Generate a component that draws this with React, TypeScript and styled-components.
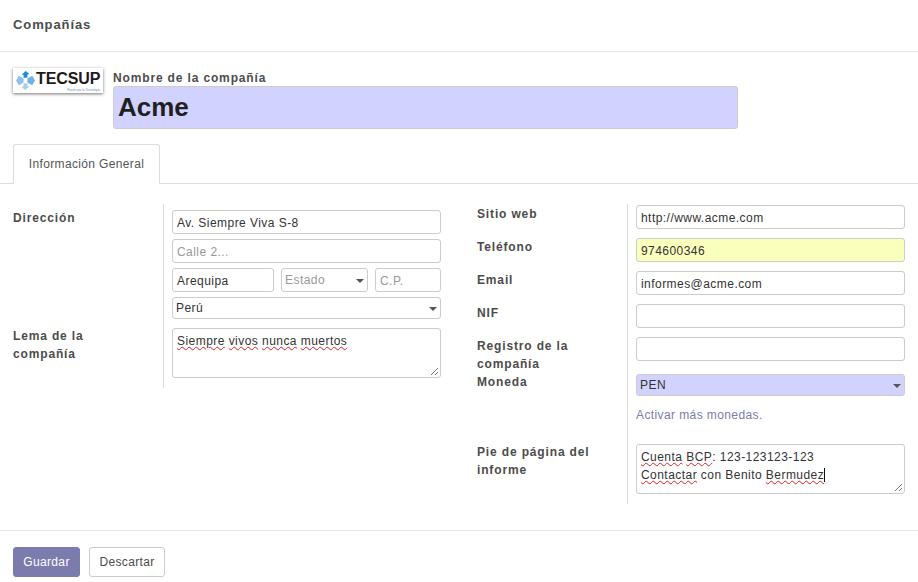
import React from "react";
import styled, { createGlobalStyle } from "styled-components";

const GlobalStyle = createGlobalStyle`
  html, body {
    margin: 0;
    padding: 0;
    background: #fff;
  }
  body {
    font-family: "Liberation Sans", Arial, sans-serif;
    font-size: 12px;
    color: #4c4c4c;
  }
`;

const Page = styled.div`
  width: 918px;
  height: 582px;
  overflow: hidden;
`;

const Header = styled.header`
  height: 51px;
  border-bottom: 1px solid #e6e6e6;
  padding-left: 13px;
  display: flex;
  align-items: center;
`;

const Title = styled.h1`
  margin: 0 0 3px;
  font-size: 13px;
  font-weight: 700;
  letter-spacing: 0.9px;
  color: #4c4c4c;
`;

const NameRow = styled.section`
  display: flex;
  box-sizing: border-box;
  padding: 16px 0 0 13px;
  height: 77px;
`;

const LogoBox = styled.div`
  width: 90px;
  height: 25px;
  box-shadow: 0 1px 3px rgba(0, 0, 0, 0.55);
  display: flex;
  align-items: center;
  padding-left: 2px;
  box-sizing: border-box;
  position: relative;
  margin-right: 10px;
  background: #fff;
`;

const LogoWord = styled.span`
  font-size: 16px;
  font-weight: 700;
  letter-spacing: -0.1px;
  color: #1f1a1a;
  margin-top: -3px;
`;

const LogoTag = styled.span`
  position: absolute;
  right: 3px;
  bottom: 1px;
  font-size: 3px;
  color: #5a8fc8;
`;

const NameBlock = styled.div`
  width: 625px;
  padding-top: 1px;
`;

const Label = styled.label`
  display: block;
  font-weight: 700;
  font-size: 12px;
  line-height: 18px;
  letter-spacing: 0.85px;
  color: #4c4c4c;
`;

const NameInput = styled.input`
  display: block;
  box-sizing: border-box;
  width: 100%;
  height: 43px;
  margin-top: -1px;
  padding: 0 4px;
  background: #d2d2ff;
  border: 1px solid #ccc;
  border-radius: 3px;
  font-family: inherit;
  font-size: 26px;
  font-weight: 700;
  color: #1f1f1f;
  outline: none;
`;

const TabBar = styled.nav`
  margin-top: 15px;
  height: 39px;
  padding-left: 13px;
  border-bottom: 1px solid #ddd;
  display: flex;
`;

const Tab = styled.div`
  width: 147px;
  height: 40px;
  box-sizing: border-box;
  border: 1px solid #ddd;
  border-bottom-color: #fff;
  border-radius: 3px 3px 0 0;
  background: #fff;
  display: flex;
  align-items: center;
  justify-content: center;
  letter-spacing: 0.35px;
  color: #555;
`;

const Columns = styled.main`
  display: flex;
  box-sizing: border-box;
  height: 346px;
  padding: 20px 0 0 13px;
`;

const Column = styled.div<{ $gap?: number }>`
  width: 428px;
  flex: none;
  margin-left: ${(p) => p.$gap ?? 0}px;
`;

const Group = styled.div<{ $height: number }>`
  display: grid;
  grid-template-columns: 150px 1fr;
  height: ${(p) => p.$height}px;
`;

const Labels = styled.div<{ $top?: number }>`
  display: flex;
  flex-direction: column;
  padding-right: 20px;
  padding-top: ${(p) => p.$top ?? 0}px;
`;

const FieldLabel = styled(Label)<{ $height: number }>`
  height: ${(p) => p.$height}px;
  flex: none;
`;

const Values = styled.div<{ $top: number }>`
  border-left: 1px solid #ddd;
  padding-left: 8px;
  padding-top: ${(p) => p.$top}px;
  display: flex;
  flex-direction: column;
`;

const Input = styled.input<{ $tone?: string; $mb?: number; $width?: number }>`
  display: block;
  box-sizing: border-box;
  width: ${(p) => (p.$width ? `${p.$width}px` : "100%")};
  height: 24px;
  flex: none;
  padding: 2px 4px 0;
  margin-bottom: ${(p) => p.$mb ?? 5}px;
  background: ${(p) => p.$tone ?? "#fff"};
  border: 1px solid #ccc;
  border-radius: 3px;
  font-family: inherit;
  font-size: 12px;
  letter-spacing: 0.45px;
  color: #333;
  outline: none;
  &::placeholder {
    color: #999;
    opacity: 1;
  }
`;

const Select = styled.div<{ $tone?: string; $width?: number; $muted?: boolean; $tall?: boolean }>`
  position: relative;
  box-sizing: border-box;
  flex: none;
  width: ${(p) => (p.$width ? `${p.$width}px` : "100%")};
  height: ${(p) => (p.$tall ? 24 : 22)}px;
  line-height: ${(p) => (p.$tall ? 23 : 21)}px;
  padding-left: 3px;
  background: ${(p) => p.$tone ?? "#fff"};
  border: 1px solid #ccc;
  border-radius: 3px;
  letter-spacing: 0.45px;
  color: ${(p) => (p.$muted ? "#999" : "#333")};
  &::after {
    content: "";
    position: absolute;
    right: 3px;
    top: 50%;
    margin-top: -1px;
    border-style: solid;
    border-width: 4px 4px 0;
    border-color: #555 transparent transparent;
  }
`;

const CityRow = styled.div`
  display: flex;
  gap: 7px;
  margin-bottom: 5px;
`;

const TextArea = styled.div<{ $mt?: number }>`
  position: relative;
  box-sizing: border-box;
  flex: none;
  width: 100%;
  height: 50px;
  margin-top: ${(p) => p.$mt ?? 0}px;
  padding: 3px 4px;
  border: 1px solid #ccc;
  border-radius: 3px;
  line-height: 18px;
  letter-spacing: 0.45px;
  color: #333;
  background: #fff;
`;

const Misspelt = styled.span`
  text-decoration: underline wavy #e02020 1px;
  text-underline-offset: 1px;
`;

const Caret = styled.span`
  border-right: 1px solid #111;
`;

const Grip = styled.svg`
  position: absolute;
  right: 1px;
  bottom: 1px;
`;

const MoreLink = styled.a`
  display: block;
  margin: 10px 0 20px;
  height: 18px;
  line-height: 18px;
  letter-spacing: 0.4px;
  color: #7c7bad;
  text-decoration: none;
`;

const Footer = styled.footer`
  border-top: 1px solid #e6e6e6;
  padding: 16px 13px 0;
  display: flex;
  gap: 9px;
`;

const Button = styled.button<{ $primary?: boolean }>`
  height: 30px;
  box-sizing: border-box;
  padding: 0;
  width: ${(p) => (p.$primary ? 67 : 76)}px;
  border: 1px solid ${(p) => (p.$primary ? "#7c7bad" : "#ccc")};
  border-radius: 3px;
  background: ${(p) => (p.$primary ? "#7c7bad" : "#fff")};
  color: ${(p) => (p.$primary ? "#fff" : "#4c4c4c")};
  font-family: inherit;
  font-size: 12px;
  letter-spacing: 0.35px;
`;

const ResizeGrip = () => (
  <Grip width="9" height="9" viewBox="0 0 9 9">
    <path d="M1 8 8 1M5 8 8 5" stroke="#777" strokeWidth="1" fill="none" />
  </Grip>
);

const LogoMark = () => (
  <svg width="21" height="21" viewBox="0 0 22 22">
    <path d="M11 1 15 4 13 5 13 8 9 8 9 5 7 5Z" fill="#1d8fd8" />
    <path d="M4 6 9 9 9 13 4 16 1 11Z" fill="#8cc3ee" />
    <path d="M18 6 21 11 18 16 13 13 13 9Z" fill="#6fb2e6" />
    <path d="M9 14 13 14 13 17 15 17 11 21 7 18 9 17Z" fill="#a6d0f2" />
  </svg>
);

export default function App() {
  return (
    <Page>
      <GlobalStyle />
      <Header>
        <Title>Compañías</Title>
      </Header>
      <NameRow>
        <LogoBox>
          <LogoMark />
          <LogoWord>TECSUP</LogoWord>
          <LogoTag>Pasión por la Tecnología</LogoTag>
        </LogoBox>
        <NameBlock>
          <Label>Nombre de la compañía</Label>
          <NameInput readOnly value="Acme" />
        </NameBlock>
      </NameRow>
      <TabBar>
        <Tab>Información General</Tab>
      </TabBar>
      <Columns>
        <Column>
          <Group $height={184}>
            <Labels $top={5}>
              <FieldLabel $height={118}>Dirección</FieldLabel>
              <FieldLabel $height={40}>Lema de la compañía</FieldLabel>
            </Labels>
            <Values $top={6}>
              <Input readOnly value="Av. Siempre Viva S-8" />
              <Input readOnly placeholder="Calle 2..." />
              <CityRow>
                <Input readOnly value="Arequipa" $width={102} $mb={0} />
                <Select $width={87} $muted $tall>
                  Estado
                </Select>
                <Input readOnly placeholder="C.P." $width={66} $mb={0} />
              </CityRow>
              <Select>Perú</Select>
              <TextArea $mt={9}>
                <Misspelt>Siempre</Misspelt> <Misspelt>vivos</Misspelt>{" "}
                <Misspelt>nunca</Misspelt> <Misspelt>muertos</Misspelt>
                <ResizeGrip />
              </TextArea>
            </Values>
          </Group>
        </Column>
        <Column $gap={36}>
          <Group $height={300}>
            <Labels $top={1}>
              <FieldLabel $height={33}>Sitio web</FieldLabel>
              <FieldLabel $height={33}>Teléfono</FieldLabel>
              <FieldLabel $height={33}>Email</FieldLabel>
              <FieldLabel $height={33}>NIF</FieldLabel>
              <FieldLabel $height={36}>Registro de la compañía</FieldLabel>
              <FieldLabel $height={70}>Moneda</FieldLabel>
              <FieldLabel $height={40}>Pie de página del informe</FieldLabel>
            </Labels>
            <Values $top={1}>
              <Input readOnly value="http://www.acme.com" $mb={9} />
              <Input readOnly value="974600346" $tone="#fbffbc" $mb={9} />
              <Input readOnly value="informes@acme.com" $mb={9} />
              <Input readOnly $mb={9} />
              <Input readOnly $mb={13} />
              <Select $tone="#d2d2ff">PEN</Select>
              <MoreLink href="#">Activar más monedas.</MoreLink>
              <TextArea>
                <Misspelt>Cuenta</Misspelt> <Misspelt>BCP</Misspelt>: 123-123123-123
                <br />
                <Misspelt>Contactar</Misspelt> con Benito <Misspelt>Bermudez</Misspelt>
                <Caret />
                <ResizeGrip />
              </TextArea>
            </Values>
          </Group>
        </Column>
      </Columns>
      <Footer>
        <Button $primary>Guardar</Button>
        <Button>Descartar</Button>
      </Footer>
    </Page>
  );
}
